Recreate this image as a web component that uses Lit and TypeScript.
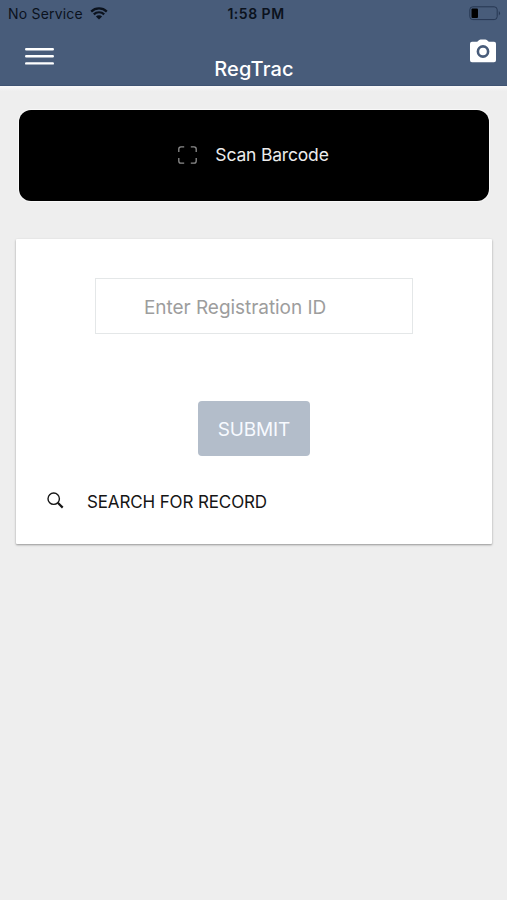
import { LitElement, html, css } from "lit";
import { customElement } from "lit/decorators.js";

@customElement("app-header")
class AppHeader extends LitElement {
  static styles = css`
    :host {
      display: block;
      box-sizing: border-box;
      height: 86px;
      background: #485c7a;
      border-bottom: 1px solid #405473;
    }
    svg {
      display: block;
    }
    .status,
    .nav {
      display: grid;
      grid-template-columns: 1fr auto 1fr;
    }
    .status {
      height: 28px;
      align-items: center;
      color: #0b121d;
      font-size: 14px;
      line-height: 28px;
    }
    .carrier {
      display: flex;
      align-items: center;
      gap: 7px;
      padding-left: 8px;
      letter-spacing: 0.2px;
    }
    .carrier svg {
      margin-top: -2px;
    }
    .time {
      font-weight: 600;
      letter-spacing: 0.5px;
      padding-left: 5px;
    }
    .battery {
      justify-self: end;
      margin: -1px 6px 0 0;
    }
    .nav {
      height: 57px;
      color: #fff;
    }
    .menu {
      margin: 19px 0 0 25px;
    }
    .title {
      margin: 27px 0 0;
      padding-left: 1px;
      font-size: 20px;
      line-height: 28px;
      font-weight: 500;
      letter-spacing: 0.2px;
    }
    .camera {
      justify-self: end;
      margin: 11px 11px 0 0;
    }
  `;

  render() {
    return html`
      <div class="status">
        <div class="carrier">
          <span>No Service</span>
          <svg width="18" height="13" viewBox="0 0 18 13" fill="none" stroke="#0b121d">
            <path d="M1.2 4.6a11.2 11.2 0 0 1 15.6 0" stroke-width="2.3" />
            <path d="M3.8 7.4a7.4 7.4 0 0 1 10.4 0" stroke-width="2.2" />
            <path d="M9 12.4 5.9 9.5a4.4 4.4 0 0 1 6.2 0z" fill="#0b121d" stroke="none" />
          </svg>
        </div>
        <span class="time">1:58 PM</span>
        <svg class="battery" width="32" height="15" viewBox="0 0 32 15">
          <rect x=".8" y=".8" width="27.4" height="12.8" rx="3" fill="none" stroke="#263752" stroke-width="1" />
          <rect x="2.5" y="2.4" width="6.5" height="9.6" rx="1" fill="#000" />
          <path d="M29.8 5q2.4 2.2 0 4.5z" fill="#263752" />
        </svg>
      </div>
      <div class="nav">
        <svg class="menu" width="29" height="19" viewBox="0 0 29 19">
          <path d="M1.2 2.2h26.6M1.2 9.3h26.6M1.2 16.4h26.6" stroke="#fff" stroke-width="2.4" stroke-linecap="round" />
        </svg>
        <h1 class="title">RegTrac</h1>
        <svg class="camera" width="26" height="24" viewBox="0 0 26 24">
          <path
            fill="#fff"
            fill-rule="evenodd"
            d="M2 2.700h5.200L9.200 1.100q.6-.6 1.400-.6h4.800q.8 0 1.400.6l2 1.600H24Q26 2.700 26 4.700v16.600q0 2-2 2H2Q0 23.300 0 21.300V4.700Q0 2.700 2 2.700zM13 6.100a6.400 6.400 0 1 0 0 12.800a6.400 6.400 0 1 0 0-12.800zM13 8.700a3.800 3.800 0 1 1 0 7.600a3.800 3.800 0 1 1 0-7.600z"
          />
        </svg>
      </div>
    `;
  }
}

@customElement("scan-button")
class ScanButton extends LitElement {
  static styles = css`
    :host {
      display: block;
    }
    .scan {
      display: flex;
      align-items: center;
      justify-content: center;
      gap: 18px;
      width: 100%;
      height: 91px;
      padding: 0 1px 1px 0;
      border: 0;
      border-radius: 12px;
      background: #000;
      box-shadow: 0 0 0 1px #f8f8f8;
      color: #ececec;
      font: 400 17.5px/24px Inter, "Liberation Sans", sans-serif;
      letter-spacing: -0.18px;
    }
  `;

  render() {
    return html`
      <button class="scan">
        <svg width="19" height="18" viewBox="0 0 19 18" fill="none" stroke="#8c8c8c" stroke-width="1.3">
          <path d="M.8 6V3Q.8.8 3 .8h3.200M12.800.8H16q2.200 0 2.200 2.200v3M18.200 12v3q0 2.200-2.200 2.200h-3.200M6.200 17.200H3Q.8 17.200.8 15v-3" />
        </svg>
        <span>Scan Barcode</span>
      </button>
    `;
  }
}

@customElement("record-card")
class RecordCard extends LitElement {
  static styles = css`
    :host {
      display: flex;
      flex-direction: column;
      align-items: center;
      box-sizing: border-box;
      height: 305px;
      padding-top: 39px;
      background: #fff;
      border-radius: 1px;
      box-shadow: 0 1px 2px rgba(0, 0, 0, 0.28), 0 1px 3px rgba(0, 0, 0, 0.12);
    }
    .field {
      box-sizing: border-box;
      width: 318px;
      height: 56px;
      padding: 2px 48px 0;
      border: 1px solid #e4e7e8;
      border-radius: 0;
      outline: 0;
      background: #fff;
      font: 400 19px/26px Inter, "Liberation Sans", sans-serif;
      letter-spacing: -0.05px;
    }
    .field::placeholder {
      color: #9d9d9d;
      opacity: 1;
    }
    .submit {
      width: 112px;
      height: 55px;
      margin-top: 67px;
      padding: 2px 0 0;
      border: 0;
      border-radius: 4px;
      background: #b3bdca;
      color: #f7faff;
      font: 400 19px/26px Inter, "Liberation Sans", sans-serif;
      letter-spacing: -0.15px;
    }
    .search {
      display: flex;
      align-self: flex-start;
      align-items: center;
      gap: 23px;
      margin: 34px 0 0 31px;
      color: #151515;
      font-size: 17px;
      line-height: 24px;
      letter-spacing: -0.13px;
    }
    .search svg {
      margin-top: -3px;
    }
  `;

  render() {
    return html`
      <input class="field" placeholder="Enter Registration ID" />
      <button class="submit"><span>SUBMIT</span></button>
      <div class="search">
        <svg width="17" height="17" viewBox="0 0 17 17" fill="none" stroke="#151515">
          <circle cx="6.700" cy="6.700" r="5.700" stroke-width="1.400" />
          <path d="m10.800 10.800 4.900 4.800" stroke-width="2.200" />
        </svg>
        <span>SEARCH FOR RECORD</span>
      </div>
    `;
  }
}

@customElement("app-root")
class AppRoot extends LitElement {
  static styles = css`
    :host {
      display: block;
      box-sizing: border-box;
      min-height: 900px;
      background: #eee;
      font-family: Inter, "Liberation Sans", sans-serif;
    }
    .content {
      padding: 24px 15px 0 16px;
      background: linear-gradient(#fafafa, #eee 5px);
    }
    scan-button {
      margin: 0 3px 38px;
    }
  `;

  render() {
    return html`
      <app-header></app-header>
      <main class="content">
        <scan-button></scan-button>
        <record-card></record-card>
      </main>
    `;
  }
}
